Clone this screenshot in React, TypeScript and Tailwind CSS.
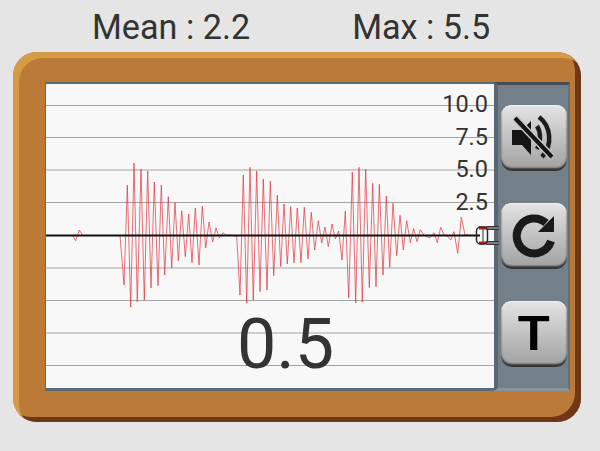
import React from "react";

const wave: [number, number][] = [
  [46,235.5],[72.7,235.5],[75.7,240.7],[79.3,230],[82.7,235.5],[120,235.5],[124,285],[127.3,185],[130.7,307],[134,163],[137.3,301.7],[141,169],[144.3,300],[147.7,171],[151,288],[154.3,182],[158,285.7],[161.3,185],[164.7,275],[168.3,196.7],[171.7,268],[175,202.7],[178.3,260.7],[181.7,210.7],[185.3,256.7],[188.7,214],[192,262.7],[195.3,208],[199,265],[202.3,206],[205.7,248],[209,222],[212.7,242],[216,228],[219.3,238],[223,232.7],[226.3,235.3],[229.7,235],[236.7,236],[240,295],[243.3,175],[246.7,303],[250,167.3],[253.3,300],[256.7,171],[260,291.7],[263.3,179],[267,290],[270.3,181],[273.7,275.7],[277.3,195],[280.7,266.7],[284,204],[287.3,264],[290.7,206.7],[294,263],[297.3,208],[301,262.7],[304.3,207.3],[308,259],[311.3,212.3],[314.7,250],[318.3,220.7],[321.7,243],[325,227],[328.3,246.7],[332,224],[335.3,239],[338.7,231],[342,260],[345.3,211],[348.7,298],[352.3,172.3],[355.7,303],[359,167.3],[362.3,302],[365.7,169],[369.3,287.7],[372.7,183.3],[376,286.7],[379.3,184.3],[383,275],[386.3,196],[389.7,267.3],[393,203.3],[396.7,255.7],[400,215.3],[403.3,250],[406.7,220.7],[410.3,242.7],[413.7,228.7],[417,241.7],[420.3,229.7],[423.7,235],[426.7,236.7],[430,238],[434,232.7],[437.3,242.7],[440.7,227.3],[444,235],[447.3,236],[450.7,240],[454,231.7],[457.7,253.3],[461.3,217.3],[465,235],[476,235.5],
];
const gridY = [105.5, 137.5, 170, 202.5, 268, 300.5, 333, 365.5];
const labels = ["10.0", "7.5", "5.0", "2.5"];

function Button({ children }: { children: React.ReactNode }) {
  return (
    <div className="flex h-[66px] w-[66px] shrink-0 items-center justify-center rounded-[11px] bg-gradient-to-b from-[#e4e4e4] to-[#a0a0a0] shadow-[inset_0_-3px_2px_#333333,inset_0_1px_1px_#f4f4f4]">
      {children}
    </div>
  );
}

export default function App() {
  return (
    <div className="h-[451px] w-[600px] overflow-hidden bg-[#e5e5e5] font-['Roboto',sans-serif] text-[#333333]">
      <div className="flex h-[52px] items-center pl-[92px] pt-[2px] text-[34.2px] leading-none">
        <span>Mean : 2.2</span>
        <span className="ml-[102px]">Max : 5.5</span>
      </div>
      <div className="ml-[13px] h-[370px] w-[568px] rounded-[24px] bg-[#bc7a38] pl-[32px] pt-[30px] shadow-[inset_6px_6px_0_#d69b46,inset_-6px_-5px_0_#6f3718]">
        <div className="relative flex h-[309px] w-[525px]">
          <div className="relative h-full w-[449px] border-b-[3px] border-l border-t-2 border-[#5b6b78] bg-[#f8f8f8]">
            <svg width="448" height="304" viewBox="46 84 448 304" className="block">
              {gridY.map((y) => (
                <line key={y} x1="46" x2="494" y1={y} y2={y} stroke="#a3a3a3" strokeWidth="1" />
              ))}
              <polyline points={wave.map((p) => p.join(",")).join(" ")} fill="none" stroke="#e0323c" strokeWidth="0.7" />
              <line x1="46" x2="480" y1="235.5" y2="235.5" stroke="#111111" strokeWidth="1.8" />
            </svg>
            <div className="absolute right-[6px] top-[4px] flex flex-col items-end text-[23.5px] leading-[32.7px] text-[#333333]">
              {labels.map((l) => (
                <span key={l}>{l}</span>
              ))}
            </div>
            <div className="absolute left-[191px] top-[224px] text-[70px] leading-[72px] text-[#333333]">0.5</div>
          </div>
          <div className="flex h-full w-[76px] flex-col gap-[32px] border-l-4 border-r-2 border-t-[3px] border-b-[3px] border-l-[#5b6770] border-r-[#5f7080] border-t-[#454b50] border-b-[#8b969c] bg-[#748089] pl-[3px] pt-[20px]">
            <Button>
              <svg width="66" height="66" viewBox="0 0 66 66">
                <path d="M11 25H21L30 16V50L21 40H11Z" fill="#141414" />
                <path d="M36 21C40 27 40 37 36 44" fill="none" stroke="#1c1c1c" strokeWidth="4.5" />
                <path d="M38 12C50 21 52 40 41 52" fill="none" stroke="#1c1c1c" strokeWidth="4.5" />
                <line x1="14" y1="13" x2="51" y2="52" stroke="#c4c4c4" strokeWidth="7" />
                <line x1="14" y1="13" x2="51" y2="52" stroke="#141414" strokeWidth="4" />
              </svg>
            </Button>
            <Button>
              <svg width="66" height="66" viewBox="0 0 66 66">
                <path d="M45 20A17.5 17.5 0 1 0 50 38" fill="none" stroke="#1a1a1a" strokeWidth="8" />
                <path d="M53 13V29H37Z" fill="#1a1a1a" />
              </svg>
            </Button>
            <Button>
              <span className="scale-x-[1.12] text-[48px] font-semibold leading-none text-black">T</span>
            </Button>
          </div>
          <svg width="26" height="22" viewBox="0 0 26 22" className="absolute left-[429px] top-[143px]">
            <path d="M12 3H25M12 18H25" stroke="#7c7c7c" strokeWidth="4" />
            <path d="M12 1.5H25M12 4.5H25M12 16.5H25M12 19.5H25" stroke="#333333" strokeWidth="1" />
            <path d="M5 3H13M5 18H13" stroke="#c81e1e" strokeWidth="3" />
            <rect x="2.5" y="2" width="11" height="17" rx="4" fill="none" stroke="#2a2a2a" strokeWidth="1.5" />
            <path d="M9 2V19" stroke="#333333" strokeWidth="1" />
          </svg>
        </div>
      </div>
    </div>
  );
}
